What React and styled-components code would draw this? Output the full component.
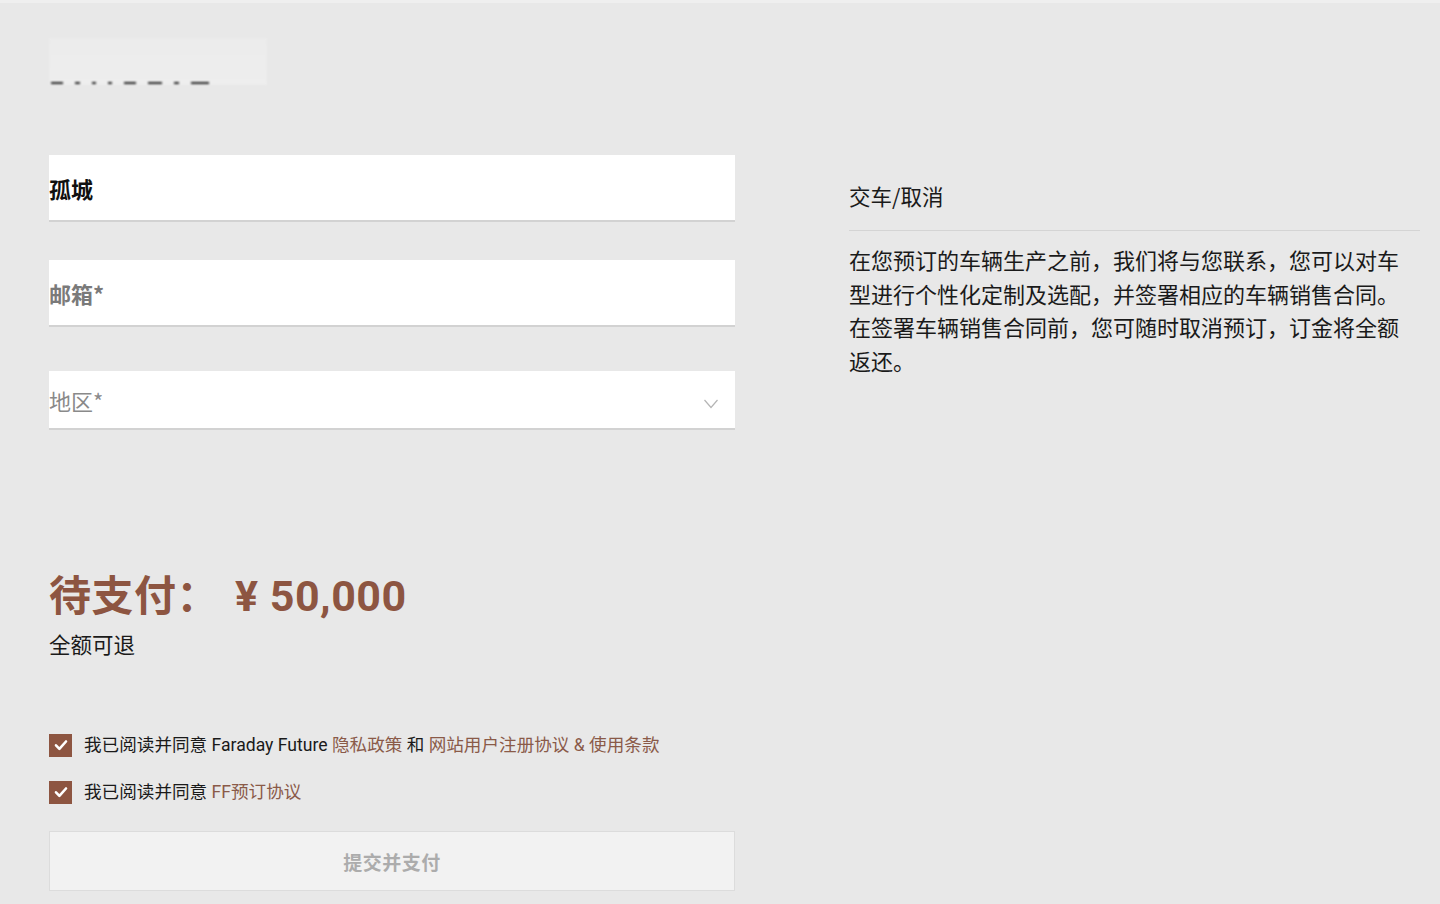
import React from "react";
import styled, { createGlobalStyle } from "styled-components";

const GlobalStyle = createGlobalStyle`
  html, body {
    margin: 0;
    padding: 0;
    background: #e8e8e8;
  }
  body {
    font-family: Roboto, "Noto Sans CJK SC", sans-serif;
    color: #1a1a1a;
  }
`;

const BRAND = "#8d5541";

const Page = styled.div`
  width: 1440px;
  height: 904px;
  overflow: hidden;
  background: #e8e8e8;
  border-top: 3px solid #efefef;
  box-sizing: border-box;
  display: grid;
  grid-template-columns: 686px 571px;
  column-gap: 114px;
  padding-left: 49px;
`;

const LeftCol = styled.div`
  display: flex;
  flex-direction: column;
`;

const RightCol = styled.div`
  padding-top: 176px;
`;

const BlurHeading = styled.div`
  margin-top: 35px;
  width: 216px;
  height: 47px;
  background: linear-gradient(#ececec, #eeeeee);
  filter: blur(1px);
  display: flex;
  align-items: flex-end;
  gap: 12px;
  padding-left: 2px;
`;

const Dash = styled.span`
  display: block;
  width: ${(p) => p.w}px;
  height: 2px;
  margin-bottom: 1px;
  background: #222;
`;

const Fields = styled.div`
  margin-top: 70px;
  display: flex;
  flex-direction: column;
`;

const Field = styled.div`
  height: ${(p) => p.h}px;
  margin-top: ${(p) => p.mt}px;
  background: #fff;
  border-bottom: 2px solid #d2d2d2;
  display: flex;
  align-items: center;
  justify-content: space-between;
  font-family: "Noto Sans CJK SC", sans-serif;
  font-size: 22px;
  font-weight: ${(p) => (p.bold ? 700 : 400)};
  color: ${(p) => p.color};
  padding-right: 16px;
`;

const ChevronWrap = styled.span`
  display: flex;
  margin-top: 8px;
`;

const Price = styled.div`
  margin-top: 136px;
  font-family: "Noto Sans CJK SC", sans-serif;
  font-size: 42px;
  font-weight: 700;
  color: ${BRAND};
  line-height: 54px;
  letter-spacing: 0.5px;
`;

const Amount = styled.span`
  font-family: Roboto, sans-serif;
  font-weight: 700;
  font-size: 43px;
  margin-left: 16px;
`;

const Refund = styled.div`
  margin-top: 6px;
  font-family: "Noto Sans CJK SC", sans-serif;
  font-size: 21.5px;
  line-height: 30px;
  color: #1a1a1a;
`;

const Agreements = styled.div`
  margin-top: 74px;
  display: flex;
  flex-direction: column;
  gap: 23px;
`;

const CheckRow = styled.label`
  display: flex;
  align-items: center;
  gap: 12px;
  font-family: Roboto, "Noto Sans CJK SC", sans-serif;
  font-size: 17.6px;
  line-height: 24px;
  color: #1a1a1a;
`;

const Box = styled.span`
  width: 23px;
  height: 23px;
  background: ${BRAND};
  display: flex;
  align-items: center;
  justify-content: center;
  flex-shrink: 0;
`;

const Link = styled.span`
  color: #8a5a48;
`;

const Submit = styled.button`
  margin-top: 27px;
  height: 60px;
  width: 100%;
  background: #f2f2f2;
  border: 1px solid #dcdcdc;
  font-family: "Noto Sans CJK SC", sans-serif;
  font-size: 19px;
  font-weight: 700;
  color: #acacac;
  letter-spacing: 0.5px;
`;

const SectionTitle = styled.div`
  font-family: "Noto Sans CJK SC", sans-serif;
  font-size: 21.5px;
  line-height: 34px;
  padding-bottom: 17px;
  border-bottom: 1px solid #d4d4d4;
  color: #1a1a1a;
`;

const Body = styled.p`
  margin: 12px 0 0;
  width: 565px;
  font-family: "Noto Sans CJK SC", sans-serif;
  font-size: 22px;
  line-height: 33.7px;
  color: #1a1a1a;
`;

const Check = () => (
  <svg width="16" height="16" viewBox="0 0 16 16">
    <path d="M3 8.3 L6.4 11.8 L13 4.5" fill="none" stroke="#fff" strokeWidth="2.6" strokeLinecap="round" strokeLinejoin="round" />
  </svg>
);

const Chevron = () => (
  <svg width="16" height="11" viewBox="0 0 16 11">
    <path d="M1.5 2 L8 9.5 L14.5 2" fill="none" stroke="#b5b5b5" strokeWidth="1.2" />
  </svg>
);

export default function App() {
  return (
    <>
      <GlobalStyle />
      <Page>
        <LeftCol>
          <BlurHeading>
            <Dash w={12} />
            <Dash w={5} />
            <Dash w={4} />
            <Dash w={4} />
            <Dash w={12} />
            <Dash w={14} />
            <Dash w={5} />
            <Dash w={18} />
          </BlurHeading>
          <Fields>
            <Field h={65} mt={0} bold color="#111">孤城</Field>
            <Field h={65} mt={38} bold color="#7a7a7a">邮箱*</Field>
            <Field h={57} mt={44} color="#8a8a8a">
              地区*
              <ChevronWrap><Chevron /></ChevronWrap>
            </Field>
          </Fields>
          <Price>
            待支付：<Amount>¥ 50,000</Amount>
          </Price>
          <Refund>全额可退</Refund>
          <Agreements>
            <CheckRow>
              <Box><Check /></Box>
              <span>
                我已阅读并同意 Faraday Future <Link>隐私政策</Link> 和 <Link>网站用户注册协议 &amp; 使用条款</Link>
              </span>
            </CheckRow>
            <CheckRow>
              <Box><Check /></Box>
              <span>
                我已阅读并同意 <Link>FF预订协议</Link>
              </span>
            </CheckRow>
          </Agreements>
          <Submit>提交并支付</Submit>
        </LeftCol>
        <RightCol>
          <SectionTitle>交车/取消</SectionTitle>
          <Body>
            在您预订的车辆生产之前，我们将与您联系，您可以对车型进行个性化定制及选配，并签署相应的车辆销售合同。在签署车辆销售合同前，您可随时取消预订，订金将全额返还。
          </Body>
        </RightCol>
      </Page>
    </>
  );
}
